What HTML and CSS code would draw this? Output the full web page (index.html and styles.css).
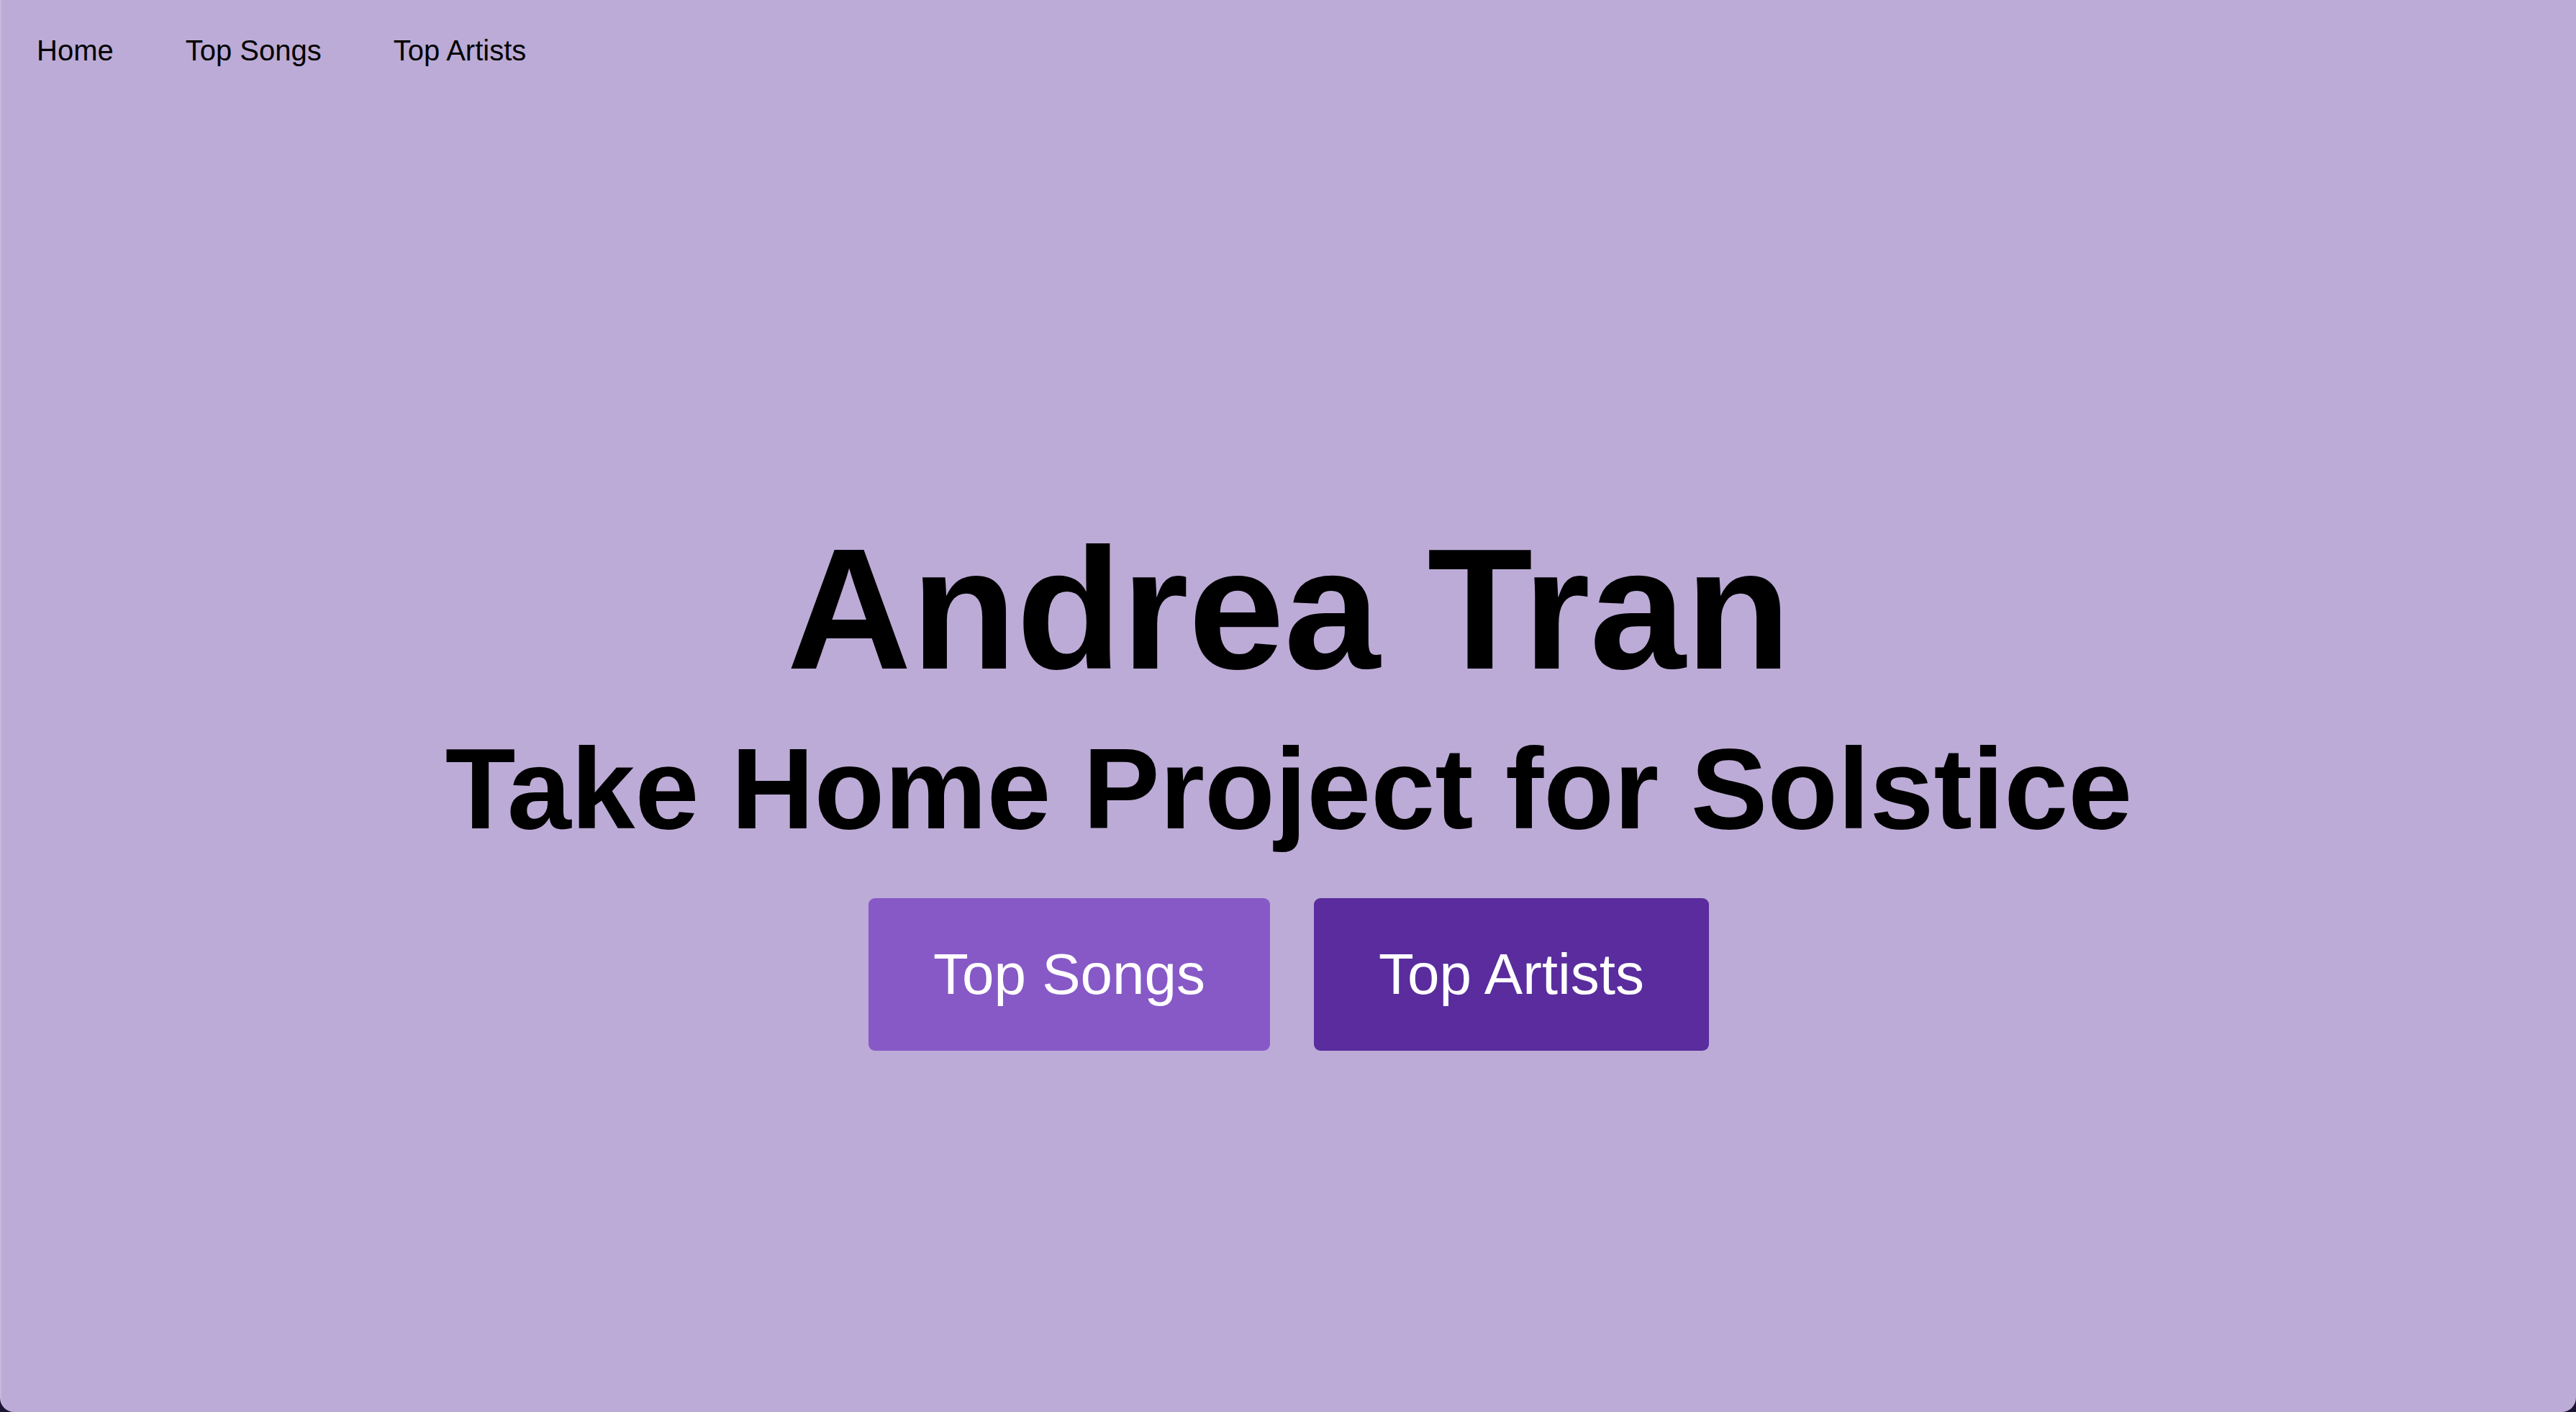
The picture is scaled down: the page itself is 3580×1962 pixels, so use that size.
FILE: index.html
```html
<!DOCTYPE html>
<html lang="en">
<head>
<meta charset="utf-8">
<title>Andrea Tran</title>
<link rel="stylesheet" href="styles.css">
</head>
<body>
<div class="page">
  <nav class="nav">
    <a class="nav-link" href="#">Home</a>
    <a class="nav-link" href="#">Top Songs</a>
    <a class="nav-link" href="#">Top Artists</a>
  </nav>
  <main class="hero">
    <h1 class="title">Andrea Tran</h1>
    <h2 class="subtitle">Take Home Project for Solstice</h2>
    <div class="actions">
      <a class="btn btn-light" href="#">Top Songs</a>
      <a class="btn btn-dark" href="#">Top Artists</a>
    </div>
  </main>
</div>
</body>
</html>
```

FILE: styles.css
```css
html, body {
  margin: 0;
  padding: 0;
  height: 100%;
}
body {
  background: #1c1433;
  font-family: "Liberation Sans", Arial, Helvetica, sans-serif;
  color: #000;
}
.page {
  min-height: 100%;
  height: 1962px;
  box-sizing: border-box;
  background: #bcabd6;
  border-left: 2px solid #c7b9de;
  border-radius: 0 0 20px 20px;
  overflow: hidden;
}
.nav {
  display: flex;
  padding-top: 47px;
}
.nav-link {
  font-size: 40px;
  line-height: 46px;
  padding: 0 50px;
  color: #000;
  text-decoration: none;
}
.nav-link:first-child {
  padding-left: 49px;
}
.hero {
  padding-top: 615px;
  text-align: center;
}
.title {
  margin: 0;
  font-size: 240px;
  line-height: 276px;
  font-weight: 700;
  letter-spacing: -0.5px;
}
.subtitle {
  margin: 20px 0 60px;
  font-size: 160px;
  line-height: 184px;
  font-weight: 700;
}
.actions {
  display: flex;
  justify-content: center;
  gap: 61px;
}
.btn {
  display: block;
  font-size: 80px;
  line-height: 92px;
  padding: 60px 90px;
  border-radius: 9px;
  color: #fff;
  text-decoration: none;
}
.btn-light {
  background: #8759c7;
}
.btn-dark {
  background: #5a2c9e;
}
```
